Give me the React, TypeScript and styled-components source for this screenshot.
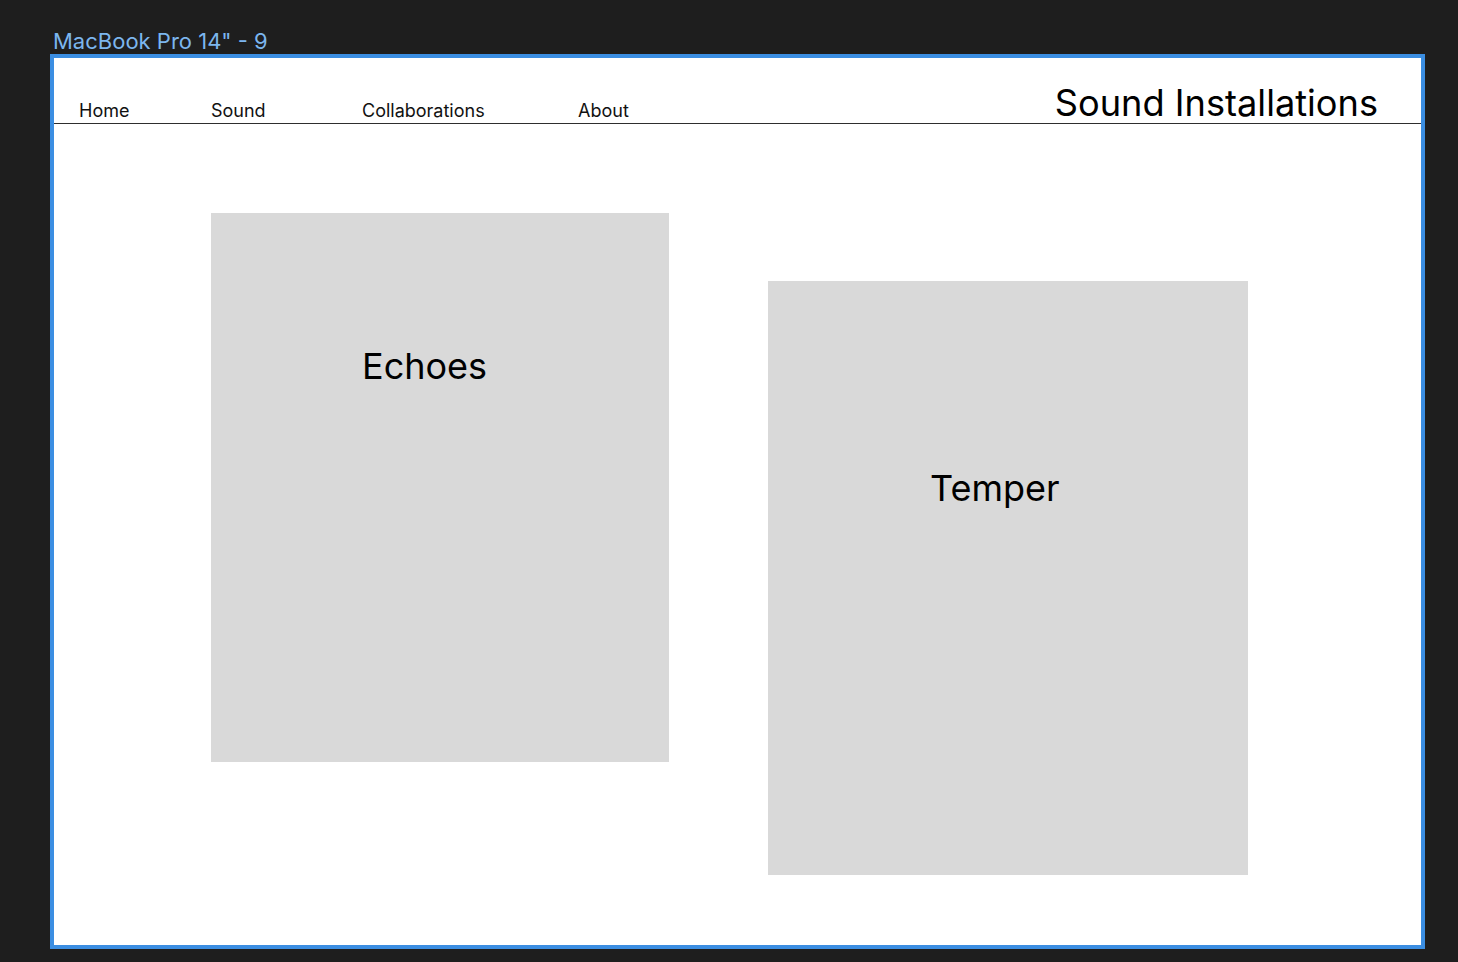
import React from "react";
import styled, { createGlobalStyle } from "styled-components";

const GlobalStyle = createGlobalStyle`
  html, body {
    margin: 0;
    padding: 0;
    background: #1e1e1e;
    font-family: Inter, "Noto Sans", sans-serif;
  }
  * { box-sizing: border-box; }
`;

const Canvas = styled.div`
  padding: 30px 0 0 50px;
  min-height: 962px;
`;

const FrameLabel = styled.div`
  font-size: 22px;
  line-height: 22px;
  color: #7cb6ee;
  padding-left: 3px;
  margin-bottom: 2px;
  height: 22px;
`;

const Frame = styled.div`
  width: 1375px;
  height: 895px;
  border: 4px solid #3b8ee2;
  background: #ffffff;
  display: flex;
  flex-direction: column;
`;

const Header = styled.header`
  height: 66px;
  border-bottom: 1px solid #2e2e2e;
  display: flex;
  justify-content: space-between;
  align-items: flex-end;
  padding: 0 43px 0 25px;
`;

const Nav = styled.nav`
  display: grid;
  grid-template-columns: 132px 151px 216px auto;
  margin-bottom: 3px;
`;

const NavItem = styled.a`
  font-size: 18px;
  line-height: 18px;
  color: #111;
  text-decoration: none;
`;

const Title = styled.h1`
  margin: 0 0 2px 0;
  font-size: 36.2px;
  line-height: 36px;
  font-weight: 400;
  color: #000;
`;

const Main = styled.main`
  display: flex;
  align-items: flex-start;
  gap: 99px;
  padding: 89px 0 0 157px;
`;

const Card = styled.div<{ $w: number; $h: number; $top: number; $offset: number; $pad: number }>`
  width: ${(p) => p.$w}px;
  height: ${(p) => p.$h}px;
  margin-top: ${(p) => p.$offset}px;
  padding: ${(p) => p.$top}px 0 0 ${(p) => p.$pad}px;
  background: #d9d9d9;
`;

const CardTitle = styled.h2`
  margin: 0;
  font-size: 36px;
  line-height: 36px;
  font-weight: 400;
  color: #000;
`;

export default function App() {
  return (
    <>
      <GlobalStyle />
      <Canvas>
        <FrameLabel>MacBook Pro 14" - 9</FrameLabel>
        <Frame>
          <Header>
            <Nav>
              <NavItem>Home</NavItem>
              <NavItem>Sound</NavItem>
              <NavItem>Collaborations</NavItem>
              <NavItem>About</NavItem>
            </Nav>
            <Title>Sound Installations</Title>
          </Header>
          <Main>
            <Card $w={458} $h={549} $offset={0} $top={135} $pad={151}>
              <CardTitle>Echoes</CardTitle>
            </Card>
            <Card $w={480} $h={594} $offset={68} $top={189} $pad={162}>
              <CardTitle>Temper</CardTitle>
            </Card>
          </Main>
        </Frame>
      </Canvas>
    </>
  );
}
